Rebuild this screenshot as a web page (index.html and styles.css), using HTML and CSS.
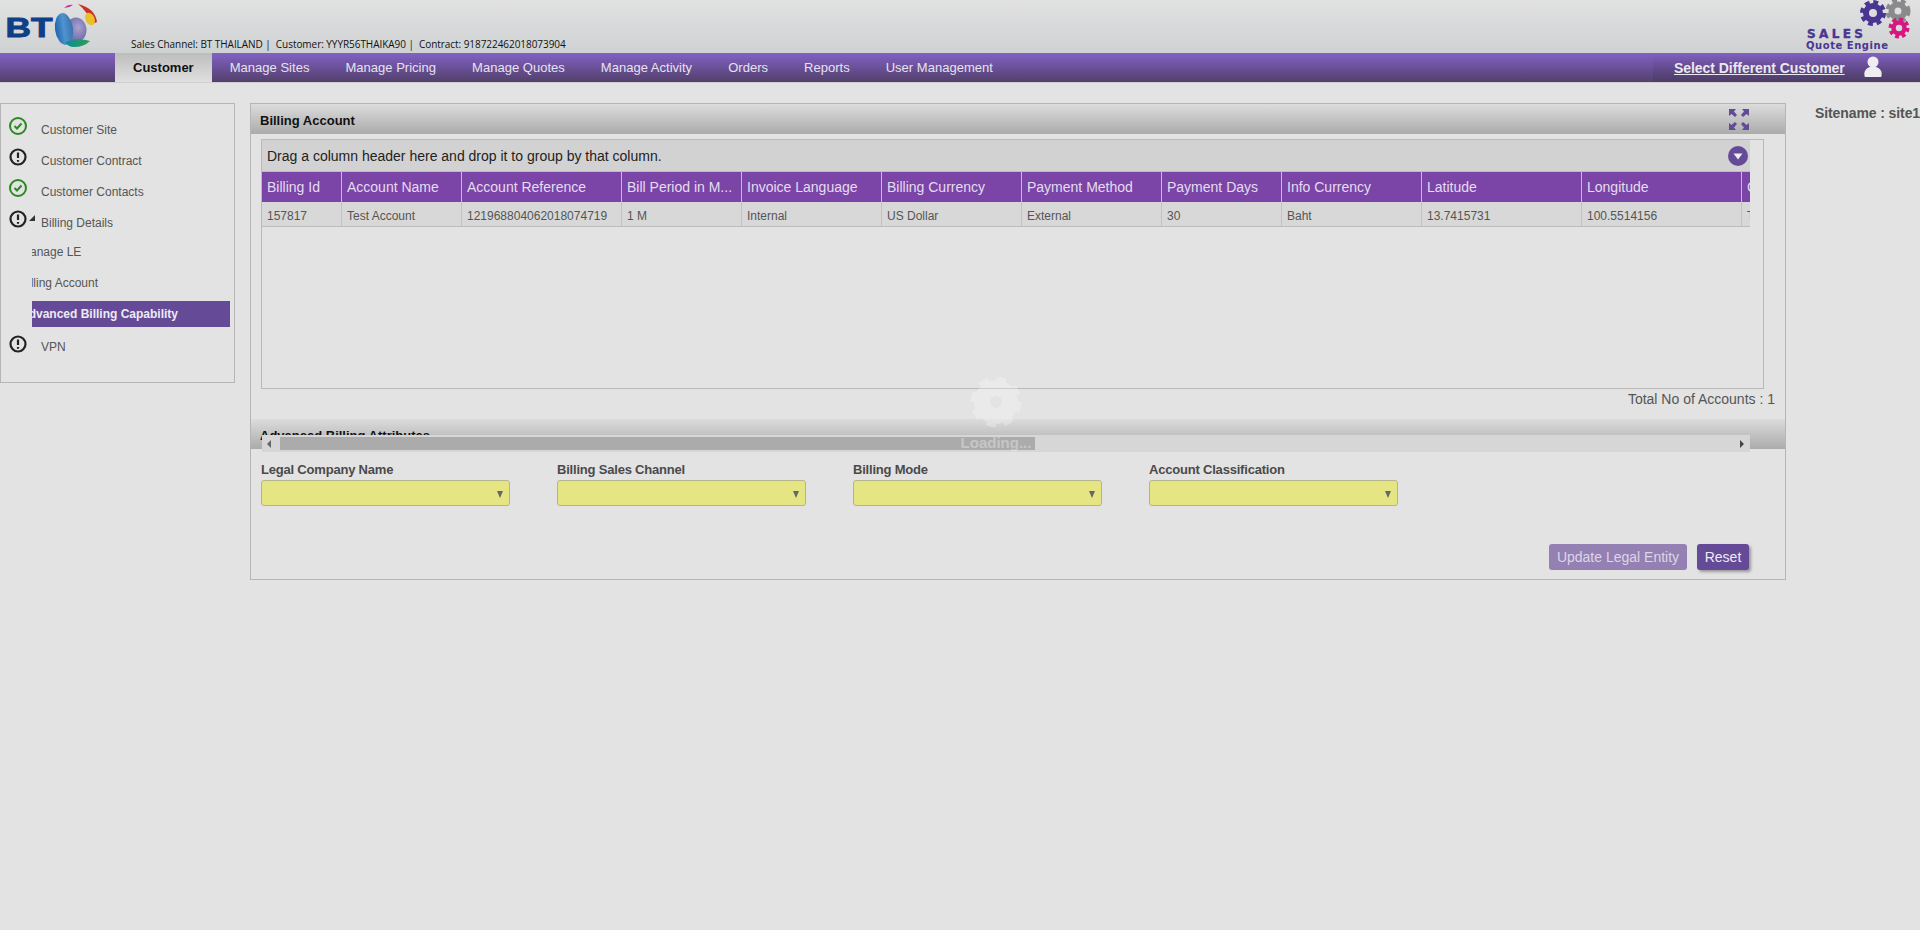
FILE: index.html
```html
<!DOCTYPE html>
<html lang="en">
<head>
<meta charset="utf-8">
<title>Sales Quote Engine</title>
<link rel="stylesheet" href="styles.css">
</head>
<body>
<header class="top">
  <svg class="bt-logo" width="100" height="53" viewBox="0 0 100 53">
    <defs>
      <radialGradient id="gp" cx="0.6" cy="0.4" r="0.7">
        <stop offset="0" stop-color="#a9a3cb"/>
        <stop offset="1" stop-color="#5f5ea6"/>
      </radialGradient>
      <linearGradient id="gb" x1="0" y1="0" x2="1" y2="0">
        <stop offset="0" stop-color="#1f63ad"/>
        <stop offset="0.5" stop-color="#4f93cf"/>
        <stop offset="1" stop-color="#3a70b0"/>
      </linearGradient>
      <linearGradient id="gt" x1="0" y1="0" x2="1" y2="0">
        <stop offset="0" stop-color="#0f8a9a"/>
        <stop offset="1" stop-color="#2aa04f"/>
      </linearGradient>
    </defs>
    <text x="5.500" y="37" class="bt-text" textLength="47" lengthAdjust="spacingAndGlyphs">BT</text>
    <ellipse cx="76" cy="30" rx="10.500" ry="12.500" class="g-purple"/>
    <ellipse cx="64" cy="29" rx="9" ry="16" transform="rotate(-8 64 29)" class="g-blue"/>
    <path d="M65 42 Q78 37 90 41 Q84 47 74 47 Q68 47 65 42Z" class="g-teal"/>
    <path d="M78 4 Q95 8 97 22 L92 24 Q88 12 78 4Z" class="g-red"/>
    <ellipse cx="90" cy="19" rx="4.500" ry="6.500" transform="rotate(-25 90 19)" class="g-yellow"/>
    <path d="M64 8 Q68 4 73 5 Q69 8 64 8Z" class="g-pink"/>
  </svg>
  <div class="info">Sales Channel: BT THAILAND |&nbsp; Customer: YYYR56THAIKA90 |&nbsp; Contract: 918722462018073904</div>
  <svg class="sqe-logo" width="112" height="53" viewBox="0 0 112 53">
    <g class="gear gear-grey" transform="translate(93 11)">
      <circle r="9.500" class="teeth"/><circle r="6.500" class="ring"/>
    </g>
    <g class="gear gear-purple" transform="translate(68 13)">
      <circle r="10" class="teeth"/><circle r="7" class="ring"/>
    </g>
    <g class="gear gear-pink" transform="translate(94 28)">
      <circle r="8" class="teeth teeth-small"/><circle r="5.500" class="ring ring-small"/>
    </g>
    <text x="2" y="38" class="sqe-sales" textLength="56">SALES</text>
    <text x="1" y="49" class="sqe-quote" textLength="82">Quote Engine</text>
  </svg>
</header>

<nav class="nav">
  <ul class="nav-list">
    <li class="nav-item active">Customer</li>
    <li class="nav-item">Manage Sites</li>
    <li class="nav-item">Manage Pricing</li>
    <li class="nav-item">Manage Quotes</li>
    <li class="nav-item">Manage Activity</li>
    <li class="nav-item">Orders</li>
    <li class="nav-item">Reports</li>
    <li class="nav-item">User Management</li>
  </ul>
  <div class="nav-right">
    <a class="select-customer">Select Different Customer</a>
    <svg class="person" width="18" height="21" viewBox="0 0 18 21">
      <circle cx="9" cy="6" r="5.500"/>
      <path d="M1 21 Q0 20 0.500 16 Q2 12 6 11 L12 11 Q16 12 17.500 16 Q18 20 17 21Z"/>
    </svg>
  </div>
</nav>

<main class="content">
  <aside class="side">
    <div class="side-row">
      <svg class="st" width="18" height="18" viewBox="0 0 18 18"><circle cx="9" cy="9" r="8" class="st-ok"/><path d="M5.500 9 L8 11.500 L12.500 6.500" class="st-ok"/></svg>
      <span>Customer Site</span>
    </div>
    <div class="side-row">
      <svg class="st" width="18" height="18" viewBox="0 0 18 18"><circle cx="9" cy="9" r="7.500" class="st-warn"/><path d="M9 4.500 V10 M9 12 V13.800" class="st-warn"/></svg>
      <span>Customer Contract</span>
    </div>
    <div class="side-row">
      <svg class="st" width="18" height="18" viewBox="0 0 18 18"><circle cx="9" cy="9" r="8" class="st-ok"/><path d="M5.500 9 L8 11.500 L12.500 6.500" class="st-ok"/></svg>
      <span>Customer Contacts</span>
    </div>
    <div class="side-row">
      <svg class="st" width="18" height="18" viewBox="0 0 18 18"><circle cx="9" cy="9" r="7.500" class="st-warn"/><path d="M9 4.500 V10 M9 12 V13.800" class="st-warn"/></svg>
      <i class="caret"></i>
      <span>Billing Details</span>
    </div>
    <ul class="sub">
      <li class="sub-item">Manage LE</li>
      <li class="sub-item">Billing Account</li>
      <li class="sub-item current">Advanced Billing Capability</li>
    </ul>
    <div class="side-row last">
      <svg class="st" width="18" height="18" viewBox="0 0 18 18"><circle cx="9" cy="9" r="7.500" class="st-warn"/><path d="M9 4.500 V10 M9 12 V13.800" class="st-warn"/></svg>
      <span>VPN</span>
    </div>
  </aside>

  <section class="panel">
    <div class="title-bar">
      <span class="title">Billing Account</span>
      <svg class="expand" width="20" height="21" viewBox="0 0 20 21">
        <path d="M0 0 H7 L5 2.500 L8 6 L6 8 L2.500 5 L0 7Z"/>
        <path d="M20 0 H13 L15 2.500 L12 6 L14 8 L17.500 5 L20 7Z"/>
        <path d="M0 21 H7 L5 18.500 L8 15 L6 13 L2.500 16 L0 14Z"/>
        <path d="M20 21 H13 L15 18.500 L12 15 L14 13 L17.500 16 L20 14Z"/>
      </svg>
    </div>

    <div class="grid">
      <div class="grid-clip">
        <div class="group-bar">
          <span>Drag a column header here and drop it to group by that column.</span>
          <svg class="group-btn" width="20" height="20" viewBox="0 0 20 20"><circle cx="10" cy="10" r="10"/><path d="M5.500 7.500 H14.500 L10 13.500Z"/></svg>
        </div>
        <div class="grid-head">
          <div class="cell c80">Billing Id</div>
          <div class="cell c120">Account Name</div>
          <div class="cell c160">Account Reference</div>
          <div class="cell c120">Bill Period in M...</div>
          <div class="cell c140">Invoice Language</div>
          <div class="cell c140">Billing Currency</div>
          <div class="cell c140">Payment Method</div>
          <div class="cell c120">Payment Days</div>
          <div class="cell c140">Info Currency</div>
          <div class="cell c160">Latitude</div>
          <div class="cell c160">Longitude</div>
          <div class="cell c140">Country</div>
        </div>
        <div class="grid-row">
          <div class="cell c80">157817</div>
          <div class="cell c120">Test Account</div>
          <div class="cell c160">121968804062018074719</div>
          <div class="cell c120">1 M</div>
          <div class="cell c140">Internal</div>
          <div class="cell c140">US Dollar</div>
          <div class="cell c140">External</div>
          <div class="cell c120">30</div>
          <div class="cell c140">Baht</div>
          <div class="cell c160">13.7415731</div>
          <div class="cell c160">100.5514156</div>
          <div class="cell c140">Thailand</div>
        </div>
      </div>
    </div>

    <div class="total">Total No of Accounts : 1</div>

    <div class="title-bar second">
      <span class="title">Advanced Billing Attributes</span>
    </div>

    <div class="form">
      <div class="field"><label>Legal Company Name</label><div class="select"></div></div>
      <div class="field"><label>Billing Sales Channel</label><div class="select"></div></div>
      <div class="field"><label>Billing Mode</label><div class="select"></div></div>
      <div class="field"><label>Account Classification</label><div class="select"></div></div>
    </div>

    <div class="actions">
      <button class="btn disabled">Update Legal Entity</button>
      <button class="btn primary">Reset</button>
    </div>

    <div class="hscroll">
      <i class="arrow left"></i>
      <div class="thumb"></div>
      <i class="arrow right"></i>
    </div>

    <div class="loader">
      <svg width="52" height="52" viewBox="0 0 52 52">
        <g transform="translate(26 26)" class="load-gear">
          <circle r="20" class="load-teeth"/><circle r="14" class="load-ring"/>
        </g>
      </svg>
      <span>Loading...</span>
    </div>
  </section>

  <div class="sitename">Sitename : site1</div>
</main>
</body>
</html>
```

FILE: styles.css
```css
* { box-sizing: border-box; }
html, body { margin: 0; padding: 0; }
body {
  width: 1920px;
  height: 930px;
  overflow: hidden;
  background: #e3e3e3;
  font-family: "Liberation Sans", Arial, sans-serif;
  color: #555;
}
ul { list-style: none; margin: 0; padding: 0; }

/* header */
.top {
  height: 53px;
  display: flex;
  background: linear-gradient(#e1e1e1, #cfd2d3);
}
.bt-logo { flex: none; }
.bt-text {
  font: bold 27px "Liberation Sans", Arial, sans-serif;
  fill: #0f3f86;
  stroke: #0f3f86;
  stroke-width: .9;
}
.g-blue { fill: url(#gb); }
.g-purple { fill: url(#gp); }
.g-teal { fill: url(#gt); }
.g-red { fill: #c8342a; }
.g-yellow { fill: #e9c22b; }
.g-pink { fill: #d5278b; }
.info {
  margin-left: 31px;
  align-self: flex-end;
  padding-bottom: 2px;
  font: 10px/14px "Open Sans", sans-serif;
  letter-spacing: -.05px;
  color: #111;
  white-space: nowrap;
}
.sqe-logo { flex: none; margin-left: auto; margin-right: 3px; }
.teeth { fill: none; stroke-width: 6; stroke-dasharray: 4.400 3.450; }
.teeth-small { stroke-width: 5; stroke-dasharray: 3.500 2.780; }
.ring { fill: none; stroke-width: 6; }
.ring-small { stroke-width: 4.500; }
.gear-purple .teeth, .gear-purple .ring { stroke: #4b3592; }
.gear-grey .teeth, .gear-grey .ring { stroke: #8a8a8c; }
.gear-pink .teeth, .gear-pink .ring { stroke: #d6177f; }
.sqe-sales { font: bold 12px "DejaVu Sans", sans-serif; fill: #4b3592; stroke: #4b3592; stroke-width: .4; }
.sqe-quote { font: bold 10px "DejaVu Sans", sans-serif; fill: #4b3592; }

/* nav */
.nav {
  height: 29px;
  display: flex;
  justify-content: space-between;
  padding-left: 115px;
  background: linear-gradient(#8261c4, #53406c);
  box-shadow: 0 1px 0 #cfcfcf;
}
.nav-list { display: flex; }
.nav-item {
  padding: 0 18px;
  font-size: 13px;
  letter-spacing: .02px;
  line-height: 29px;
  color: #e6e2ee;
  white-space: nowrap;
}
.nav-item.active {
  background: linear-gradient(#bdbdbd, #e0e0e0);
  color: #111;
  font-weight: bold;
  letter-spacing: 0;
}
.nav-right {
  width: 267px;
  display: flex;
  align-items: center;
  padding-left: 21px;
  background: linear-gradient(rgba(0,0,0,0), rgba(60,45,85,.25));
}
.select-customer {
  font-size: 14px;
  font-weight: bold;
  letter-spacing: -.05px;
  color: #ebe8f2;
  text-decoration: underline;
  white-space: nowrap;
}
.person { margin-left: 19px; margin-top: -2px; fill: #eeeef2; }

/* content */
.content { display: flex; align-items: flex-start; padding-top: 21px; }

/* sidebar */
.side {
  flex: none;
  width: 235px;
  height: 280px;
  margin-right: 15px;
  padding-top: 10px;
  border: 1px solid #b5b5b5;
}
.side-row {
  display: flex;
  height: 31px;
  padding-left: 8px;
  font-size: 12px;
  line-height: 33px;
  white-space: nowrap;
}
.side-row.last { line-height: 31px; }
.side-row span { margin-left: 14px; }
.st { flex: none; margin-top: 3px; fill: none; stroke-width: 2; }
.st-ok { stroke: #2b8a1f; }
.st-warn { stroke: #222; stroke-width: 2.200; }
.caret {
  width: 0;
  height: 0;
  margin: 8px -8px 0 2px;
  border-style: solid;
  border-width: 0 0 6px 6px;
  border-color: transparent transparent #333 transparent;
}
.sub {
  width: 198px;
  margin: 1px 0 5px 31px;
  overflow: hidden;
}
.sub-item {
  height: 26px;
  margin-bottom: 5px;
  font-size: 12px;
  line-height: 26px;
  text-indent: -12px;
  white-space: nowrap;
}
.sub-item:last-child { margin-bottom: 0; }
.sub-item.current {
  background: #654b97;
  color: #eeeaf4;
  font-weight: bold;
}

/* panel */
.panel {
  position: relative;
  flex: none;
  width: 1536px;
  height: 477px;
  border: 1px solid #b5b5b5;
}
.title-bar {
  display: flex;
  align-items: center;
  justify-content: space-between;
  height: 30px;
  padding: 0 36px 0 9px;
  background: linear-gradient(#dcdcdc, #ababab);
}
.title { margin-top: 2px; font-size: 13px; font-weight: bold; color: #111; }
.expand { fill: #654b97; }

/* grid */
.grid {
  width: 1503px;
  height: 250px;
  margin: 5px 0 0 10px;
  border: 1px solid #b9b9b9;
}
.grid-clip { width: 1488px; overflow: hidden; }
.group-bar {
  display: flex;
  align-items: center;
  justify-content: space-between;
  height: 32px;
  padding: 0 2px 0 5px;
  background: #d2d2d2;
  border-bottom: 1px solid #bdbdbd;
  font-size: 14px;
  color: #222;
}
.group-btn { fill: #654b97; }
.group-btn path { fill: #eee; }
.grid-head, .grid-row { display: flex; width: 1620px; }
.grid-head { height: 30px; background: #7b45a8; color: #e4ddee; font-size: 14px; line-height: 31px; }
.grid-row { height: 25px; background: #d8d8d8; border-bottom: 1px solid #bcbcbc; font-size: 12px; line-height: 28px; }
.cell {
  flex: none;
  padding-left: 5px;
  border-right: 1px solid #c4c0c8;
  white-space: nowrap;
  overflow: hidden;
}
.c80 { width: 80px; }
.c120 { width: 120px; }
.c140 { width: 140px; }
.c160 { width: 160px; }

.total {
  height: 30px;
  padding-right: 10px;
  text-align: right;
  font-size: 14px;
  line-height: 20px;
}

/* form */
.form { display: flex; gap: 47.500px; padding: 12px 0 0 10px; }
.field { width: 248.500px; }
.field label {
  display: block;
  height: 19px;
  font-size: 13px;
  font-weight: bold;
  letter-spacing: -.2px;
  line-height: 18px;
  color: #4a4a4a;
}
.select {
  position: relative;
  height: 26px;
  border: 1px solid #b5b58c;
  border-radius: 3px;
  background: #e5e584;
}
.select::after {
  content: "";
  position: absolute;
  right: 6px;
  top: 10px;
  border-style: solid;
  border-width: 7px 3px 0 3px;
  border-color: #666 transparent transparent transparent;
}

.actions { display: flex; justify-content: flex-end; gap: 10px; padding: 38px 36px 0 0; }
.btn {
  height: 26px;
  padding: 0;
  border: 0;
  border-radius: 3px;
  font: 14px "Liberation Sans", Arial, sans-serif;
}
.btn.disabled { width: 138px; background: #9480b2; color: #dcd6e6; }
.btn.primary { width: 52px; background: #654b97; color: #eeeaf4; box-shadow: 2px 2px 3px #999; }

/* overlays */
.hscroll {
  position: absolute;
  left: 11px;
  top: 331px;
  width: 1488px;
  height: 17px;
  display: flex;
  align-items: center;
  background: #d6d6d6;
}
.thumb { width: 755px; height: 13px; margin-left: 9px; background: #ababab; }
.arrow { width: 0; height: 0; border-style: solid; }
.arrow.left { margin-left: 5px; border-width: 4px 4px 4px 0; border-color: transparent #666 transparent transparent; }
.arrow.right { margin-left: auto; margin-right: 6px; border-width: 4px 0 4px 4px; border-color: transparent transparent transparent #444; }

.loader {
  position: absolute;
  left: 700px;
  top: 272px;
  width: 90px;
  display: flex;
  flex-direction: column;
  align-items: center;
  gap: 7px;
  pointer-events: none;
}
.loader span { font-size: 15px; font-weight: bold; line-height: 16px; color: #fff; opacity: .33; white-space: nowrap; }
.load-gear { opacity: .28; }
.load-teeth { fill: none; stroke: #fff; stroke-width: 11; stroke-dasharray: 8.500 7.210; }
.load-ring { fill: none; stroke: #fff; stroke-width: 16; }

.sitename {
  flex: none;
  margin-left: 29px;
  padding-top: 2px;
  font-size: 14px;
  font-weight: bold;
  letter-spacing: -.1px;
  white-space: nowrap;
}
```
